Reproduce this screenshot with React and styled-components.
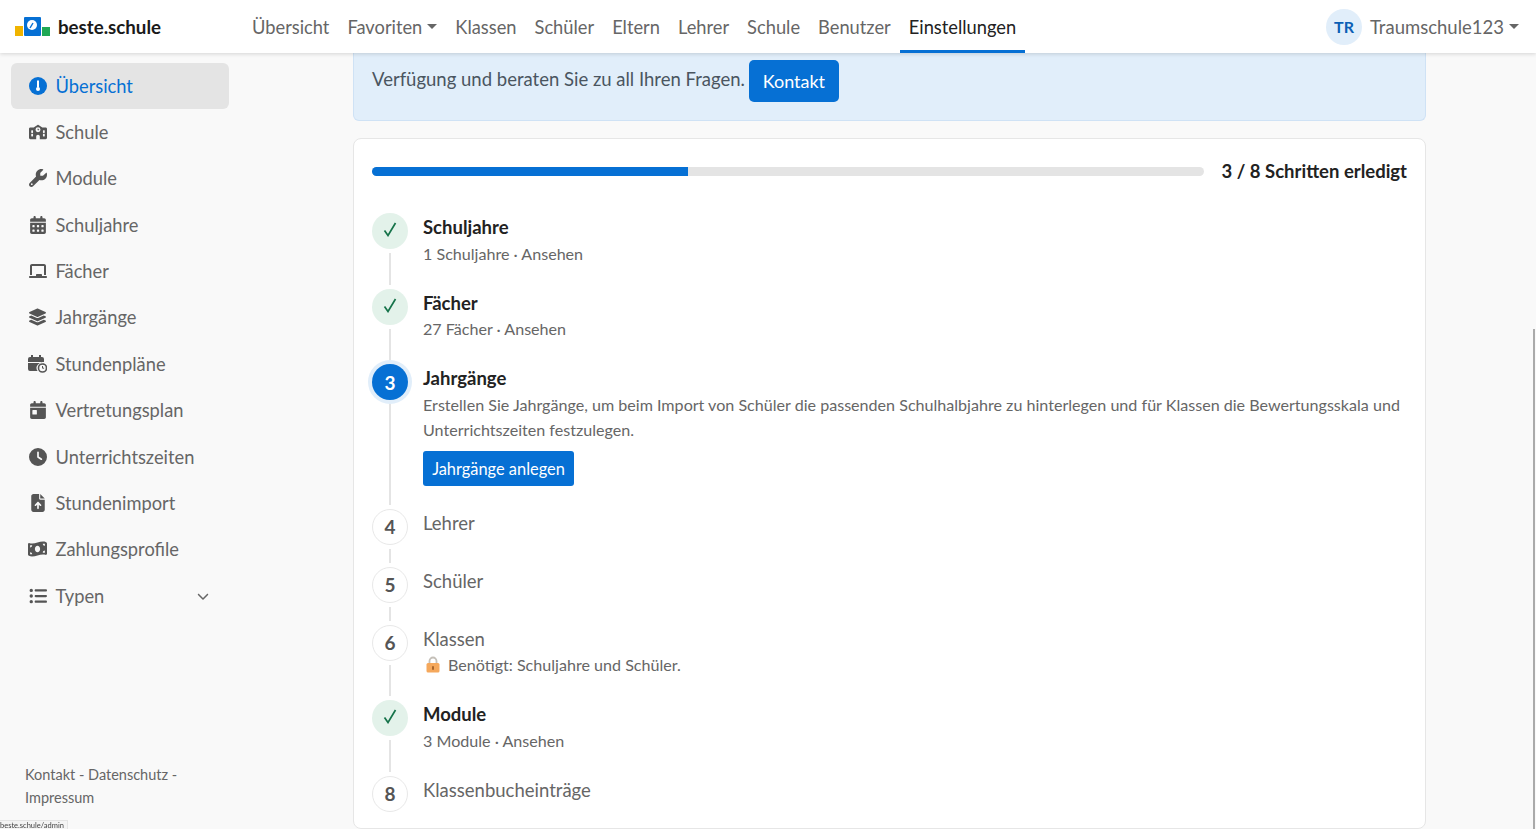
import styled, { createGlobalStyle } from 'styled-components';
import {
  FaSchool, FaWrench, FaCalendarDays, FaChalkboard, FaLayerGroup, FaCalendarDay,
  FaClock, FaFileArrowUp, FaMoneyBillWave, FaListUl, FaChevronDown,
} from 'react-icons/fa6';

const FONT = 'Lato, "Noto Sans", sans-serif';

const navLinks = [
  { label: 'Übersicht' },
  { label: 'Favoriten', caret: true },
  { label: 'Klassen' },
  { label: 'Schüler' },
  { label: 'Eltern' },
  { label: 'Lehrer' },
  { label: 'Schule' },
  { label: 'Benutzer' },
  { label: 'Einstellungen', active: true },
];

const GaugeIcon = () => (
  <svg width="18" height="18" viewBox="0 0 18 18">
    <circle cx="9" cy="9" r="9" fill="currentColor" />
    <rect x="8" y="3.5" width="2" height="7" fill="#fff" />
    <circle cx="9" cy="12" r="2" fill="#fff" />
  </svg>
);

const CalendarClockIcon = () => (
  <svg width="19" height="18" viewBox="0 0 19 18">
    <path fill="currentColor" d="M3 0h2v2h6V0h2v2h1a2 2 0 0 1 2 2v3H0V4a2 2 0 0 1 2-2h1zM0 8h16v.6A5 5 0 0 0 9.6 16H2a2 2 0 0 1-2-2z" />
    <circle cx="14.5" cy="13" r="4" fill="none" stroke="currentColor" strokeWidth="1.6" />
    <path d="M14.5 11v2.2h1.6" fill="none" stroke="currentColor" strokeWidth="1" />
  </svg>
);

const LockIcon = () => (
  <svg width="14" height="17" viewBox="0 0 14 17">
    <path d="M3.5 8V5a3.5 3.5 0 0 1 7 0v3" fill="none" stroke="#c4bfb8" strokeWidth="1.8" />
    <rect x="0.5" y="7" width="13" height="9.5" rx="1.5" fill="#f5a85c" />
    <rect x="6" y="10" width="2" height="4" rx="1" fill="#a8642a" />
  </svg>
);

const sideItems = [
  { label: 'Übersicht', icon: <GaugeIcon />, active: true },
  { label: 'Schule', icon: <FaSchool /> },
  { label: 'Module', icon: <FaWrench /> },
  { label: 'Schuljahre', icon: <FaCalendarDays /> },
  { label: 'Fächer', icon: <FaChalkboard /> },
  { label: 'Jahrgänge', icon: <FaLayerGroup size={20} /> },
  { label: 'Stundenpläne', icon: <CalendarClockIcon /> },
  { label: 'Vertretungsplan', icon: <FaCalendarDay /> },
  { label: 'Unterrichtszeiten', icon: <FaClock /> },
  { label: 'Stundenimport', icon: <FaFileArrowUp /> },
  { label: 'Zahlungsprofile', icon: <FaMoneyBillWave size={20} /> },
  { label: 'Typen', icon: <FaListUl />, more: true },
];

const steps = [
  { state: 'done', title: 'Schuljahre', sub: '1 Schuljahre · Ansehen' },
  { state: 'done', title: 'Fächer', sub: '27 Fächer · Ansehen' },
  { state: 'active', num: 3, title: 'Jahrgänge' },
  { state: 'open', num: 4, title: 'Lehrer' },
  { state: 'open', num: 5, title: 'Schüler' },
  { state: 'open', num: 6, title: 'Klassen', lock: 'Benötigt: Schuljahre und Schüler.' },
  { state: 'done', title: 'Module', sub: '3 Module · Ansehen' },
  { state: 'open', num: 8, title: 'Klassenbucheinträge', last: true },
];

const App = () => {
  return (
    <>
      <GlobalStyle />
      <Navbar>
        <Brand>
          <svg width="35" height="19" viewBox="0 0 35 19">
            <rect x="0" y="9" width="8" height="10" fill="#f0b400" />
            <rect x="9" y="0" width="17" height="19" rx="1" fill="#0670d4" />
            <rect x="27" y="10" width="8" height="9" fill="#1fa855" />
            <circle cx="17" cy="8" r="5" fill="#fff" />
            <path d="M15 11l3-5" stroke="#0670d4" strokeWidth="1.4" />
          </svg>
          beste.schule
        </Brand>
        <NavLinks>
          {navLinks.map((link) => (
            <NavLink key={link.label} $active={link.active}>
              {link.label}
              {link.caret && <Caret />}
            </NavLink>
          ))}
        </NavLinks>
        <UserMenu>
          <Avatar>TR</Avatar>
          Traumschule123
          <Caret />
        </UserMenu>
      </Navbar>
      <Body>
        <Sidebar>
          <SideList>
            {sideItems.map((item) => (
              <SideItem key={item.label} $active={item.active}>
                <SideIcon $active={item.active}>{item.icon}</SideIcon>
                {item.label}
                {item.more && <More><FaChevronDown /></More>}
              </SideItem>
            ))}
          </SideList>
          <SideFooter>Kontakt - Datenschutz - Impressum</SideFooter>
        </Sidebar>
        <Main>
          <Notice>
            <NoticeText>Verfügung und beraten Sie zu all Ihren Fragen.</NoticeText>
            <ContactButton>Kontakt</ContactButton>
          </Notice>
          <Card>
            <ProgressRow>
              <ProgressTrack>
                <ProgressFill style={{ width: '38%' }} />
              </ProgressTrack>
              <ProgressLabel>3 / 8 Schritten erledigt</ProgressLabel>
            </ProgressRow>
            {steps.map((step) => (
              <Step key={step.title}>
                <Rail>
                  <Bullet $state={step.state}>
                    {step.state === 'done' ? (
                      <Check viewBox="0 0 14 15">
                        <path d="M1.5 8.5l3.5 5L12.5 1" fill="none" stroke="currentColor" strokeWidth="1.7" />
                      </Check>
                    ) : step.num}
                  </Bullet>
                  {!step.last && <RailLine />}
                </Rail>
                <StepBody>
                  <StepTitle $done={step.state !== 'open'}>{step.title}</StepTitle>
                  {step.sub && <StepText>{step.sub}</StepText>}
                  {step.lock && <LockText><LockIcon />{step.lock}</LockText>}
                  {step.state === 'active' && (
                    <>
                      <StepText>
                        Erstellen Sie Jahrgänge, um beim Import von Schüler die passenden Schulhalbjahre zu hinterlegen und für Klassen die Bewertungsskala und Unterrichtszeiten festzulegen.
                      </StepText>
                      <StepButton>Jahrgänge anlegen</StepButton>
                    </>
                  )}
                </StepBody>
              </Step>
            ))}
          </Card>
        </Main>
      </Body>
      <ScrollThumb />
      <StatusTip>beste.schule/admin</StatusTip>
    </>
  );
};

const GlobalStyle = createGlobalStyle`
  html, body {
    margin: 0;
    height: 100%;
    overflow: hidden;
    background: #f9f9f9;
    font-family: ${FONT};
    color: #666;
  }
  * { box-sizing: border-box; }
`;

const Navbar = styled.header`
  height: 53px;
  background: #fff;
  box-shadow: 0 1px 4px rgba(0, 0, 0, 0.15);
  display: flex;
  align-items: center;
  padding: 0 17px 0 15px;
  position: relative;
  z-index: 2;
`;

const Brand = styled.div`
  width: 228px;
  display: flex;
  align-items: center;
  gap: 8px;
  font-size: 18.7px;
  font-weight: 700;
  color: #1a1a1a;
`;

const NavLinks = styled.nav`
  display: flex;
  height: 100%;
  flex: 1;
`;

const NavLink = styled.a`
  display: flex;
  align-items: center;
  padding: 0 9px;
  font-size: 18.3px;
  color: ${(props) => props.$active ? '#222' : '#666'};
  border-bottom: 3px solid ${(props) => props.$active ? '#0670d4' : 'transparent'};
  border-top: 3px solid transparent;
`;

const Caret = styled.span`
  margin-left: 5px;
  border-top: 5px solid currentColor;
  border-left: 5px solid transparent;
  border-right: 5px solid transparent;
`;

const UserMenu = styled.div`
  display: flex;
  align-items: center;
  font-size: 18.5px;
  color: #666;
`;

const Avatar = styled.span`
  width: 36px;
  height: 36px;
  border-radius: 50%;
  background: #e1eefa;
  color: #0b5fb5;
  font-size: 16px;
  font-weight: 700;
  display: flex;
  align-items: center;
  justify-content: center;
  margin-right: 8px;
`;

const Body = styled.div`
  display: flex;
  height: 776px;
`;

const Sidebar = styled.aside`
  width: 240px;
  flex: none;
  padding: 10px 11px 0;
  display: flex;
  flex-direction: column;
`;

const SideList = styled.div`
  display: flex;
  flex-direction: column;
  gap: 0.4px;
  flex: 1;
`;

const SideItem = styled.a`
  height: 46px;
  display: flex;
  align-items: center;
  gap: 8.5px;
  padding: 0 17px 1px;
  border-radius: 6px;
  font-size: 18.3px;
  color: ${(props) => props.$active ? '#0670d4' : '#666'};
  background: ${(props) => props.$active ? '#e4e4e4' : 'transparent'};
`;

const SideIcon = styled.span`
  width: 19px;
  display: flex;
  justify-content: center;
  font-size: 18px;
  color: ${(props) => props.$active ? '#0670d4' : '#555'};
`;

const More = styled.span`
  margin-left: auto;
  margin-right: 3px;
  display: flex;
  font-size: 12px;
`;

const SideFooter = styled.div`
  padding: 0 14px 20px;
  font-size: 14.5px;
  line-height: 23px;
`;

const Main = styled.main`
  flex: 1;
  min-width: 0;
  padding: 0 110px 0 113px;
`;

const Notice = styled.div`
  height: 68px;
  display: flex;
  align-items: center;
  gap: 4px;
  padding: 0 18px 12px;
  background: #e1eefa;
  border: 1px solid #cfe2f5;
  border-top: none;
  border-radius: 0 0 6px 6px;
  font-size: 18.5px;
  color: #4a5560;
`;

const NoticeText = styled.span`
  margin-bottom: 4px;
`;

const ContactButton = styled.button`
  height: 42px;
  width: 90px;
  border: none;
  border-radius: 5px;
  background: #0670d4;
  color: #fff;
  font: 18px ${FONT};
`;

const Card = styled.section`
  margin-top: 17px;
  background: #fff;
  border: 1px solid #e6e6e6;
  border-radius: 8px;
  padding: 20px 18px 0;
  height: 691px;
`;

const ProgressRow = styled.div`
  display: flex;
  align-items: center;
  gap: 18px;
  height: 25px;
  margin-bottom: 29px;
`;

const ProgressTrack = styled.div`
  flex: 1;
  height: 9px;
  border-radius: 5px;
  background: #e4e4e4;
  overflow: hidden;
`;

const ProgressFill = styled.div`
  height: 100%;
  background: #0670d4;
`;

const ProgressLabel = styled.div`
  padding-bottom: 2px;
  font-size: 18.5px;
  font-weight: 700;
  color: #222;
`;

const Step = styled.div`
  display: flex;
  gap: 15px;
`;

const Rail = styled.div`
  width: 36px;
  flex: none;
  display: flex;
  flex-direction: column;
  align-items: center;
`;

const Bullet = styled.div`
  width: 36px;
  height: 36px;
  flex: none;
  border-radius: 50%;
  display: flex;
  align-items: center;
  justify-content: center;
  font-size: 19px;
  font-weight: 700;
  background: ${(props) => ({ done: '#e3f2ea', active: '#0670d4', open: '#fff' }[props.$state])};
  color: ${(props) => ({ done: '#16734a', active: '#fff', open: '#555' }[props.$state])};
  border: ${(props) => props.$state === 'open' ? '1px solid #e8e8e8' : 'none'};
  box-shadow: ${(props) => props.$state === 'active' ? '0 0 0 4px #e1eefa' : 'none'};
`;

const Check = styled.svg`
  width: 14px;
  height: 15px;
  margin-bottom: 3px;
`;

const RailLine = styled.div`
  width: 2px;
  flex: 1;
  min-height: 14px;
  margin: 4px 0;
  background: #e4e4e4;
`;

const StepBody = styled.div`
  flex: 1;
  padding: 1px 0 23px;
`;

const StepTitle = styled.div`
  font-size: 18.5px;
  line-height: 26.5px;
  font-weight: ${(props) => props.$done ? 700 : 400};
  color: ${(props) => props.$done ? '#222' : '#666'};
`;

const StepText = styled.div`
  font-size: 16.1px;
  line-height: 25px;
  color: #666;
`;

const LockText = styled(StepText)`
  display: flex;
  align-items: center;
  gap: 8px;
  padding-left: 3px;
`;

const StepButton = styled.button`
  display: block;
  margin-top: 9px;
  width: 151px;
  height: 35px;
  border: none;
  border-radius: 3px;
  background: #0670d4;
  color: #fff;
  font: 16.4px ${FONT};
`;

const ScrollThumb = styled.div`
  position: fixed;
  right: 1px;
  top: 329px;
  bottom: 0;
  width: 2px;
  background: #aaa;
`;

const StatusTip = styled.div`
  position: fixed;
  left: 0;
  bottom: 0;
  height: 9px;
  padding: 0 3px 0 0;
  font-size: 7.5px;
  line-height: 9px;
  background: #f4f4f4;
  border: 1px solid #e4e4e4;
  border-width: 1px 1px 0 0;
  color: #444;
`;

export default App;
